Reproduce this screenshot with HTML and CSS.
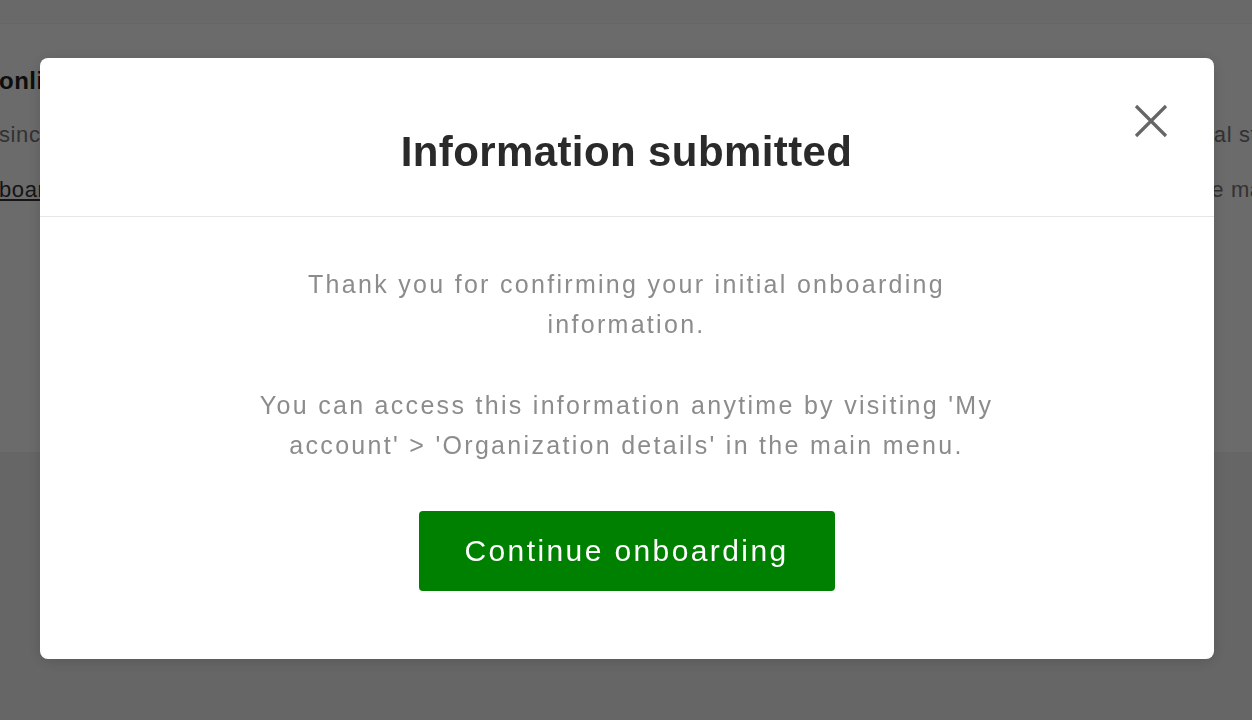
FILE: index.html
```html
<!DOCTYPE html>
<html lang="en">
<head>
<meta charset="utf-8">
<title>Information submitted</title>
<link rel="stylesheet" href="styles.css">
</head>
<body>
<div class="page">
  <header class="topbar"></header>
  <main class="card">
    <h2 class="card-title">online onboarding</h2>
    <p class="card-text">since your business was registered with us and verified and approved by our team, please complete all of the additional steps below before you continue</p>
    <p class="card-text"><a href="#" class="card-link">boarding guide</a> for more details and for help, or visit your organization account settings page at any time, right from the main menu</p>
  </main>
</div>

<div class="overlay">
  <div class="modal" role="dialog" aria-labelledby="modal-title">
    <div class="modal-header">
      <h1 id="modal-title" class="modal-title">Information submitted</h1>
      <button class="modal-close" aria-label="Close">
        <svg width="34" height="34" viewBox="0 0 34 34" aria-hidden="true">
          <path d="M2 2 L32 32 M32 2 L2 32" stroke="#666666" stroke-width="3.2" stroke-linecap="butt" fill="none"/>
        </svg>
      </button>
    </div>
    <div class="modal-body">
      <p class="modal-text">Thank you for confirming your initial onboarding information.</p>
      <p class="modal-text">You can access this information anytime by visiting 'My account' &gt; 'Organization details' in the main menu.</p>
      <button class="btn-primary">Continue onboarding</button>
    </div>
  </div>
</div>
</body>
</html>
```

FILE: styles.css
```css
* { box-sizing: border-box; }

html, body {
  margin: 0;
  padding: 0;
  height: 100%;
}

body {
  font-family: "Liberation Sans", Arial, sans-serif;
  background: #f3f3f3;
  overflow: hidden;
}

.page {
  display: flex;
  flex-direction: column;
  overflow: hidden;
}

.topbar {
  height: 24px;
  background: #fbfbfb;
  border-bottom: 1px solid #f2f2f2;
}

.card {
  height: 428px;
  background: #ffffff;
  padding: 42px 0 0 0;
  margin-left: -1px;
  overflow: hidden;
}

.card-title {
  margin: 0;
  font-size: 24px;
  line-height: 30px;
  font-weight: bold;
  color: #222;
  letter-spacing: 0.5px;
}

.card-text {
  margin: 23px 0 0 0;
  font-size: 22px;
  line-height: 32px;
  color: #777;
  white-space: nowrap;
  letter-spacing: 0.6px;
}

.card-link {
  color: #333;
}

.overlay {
  position: fixed;
  inset: 0;
  background: rgba(0, 0, 0, 0.58);
  display: flex;
  justify-content: center;
  align-items: flex-start;
  padding: 58px 0 0 1px;
}

.modal {
  width: 1174px;
  background: #ffffff;
  border-radius: 8px;
  box-shadow: 0 2px 16px rgba(0, 0, 0, 0.15);
  display: flex;
  flex-direction: column;
}

.modal-header {
  position: relative;
  height: 159px;
  border-bottom: 1px solid #e6e6e6;
  display: flex;
  justify-content: center;
  padding-top: 70px;
}

.modal-title {
  margin: 0;
  font-size: 42px;
  line-height: 48px;
  font-weight: bold;
  color: #2a2a2a;
  letter-spacing: 0.4px;
}

.modal-close {
  position: absolute;
  top: 46px;
  right: 46px;
  width: 34px;
  height: 34px;
  padding: 0;
  border: none;
  background: transparent;
  cursor: pointer;
  display: flex;
}

.modal-body {
  display: flex;
  flex-direction: column;
  align-items: center;
  padding: 47px 0 68px;
}

.modal-text {
  margin: 0;
  max-width: 760px;
  text-align: center;
  font-size: 25px;
  line-height: 40px;
  color: #8c8c8c;
  letter-spacing: 2.3px;
}

.modal-text + .modal-text {
  margin-top: 41px;
}

.btn-primary {
  margin-top: 46px;
  width: 416px;
  height: 80px;
  border: none;
  border-radius: 4px;
  background: #008000;
  color: #ffffff;
  font-family: "Liberation Sans", Arial, sans-serif;
  font-size: 30px;
  letter-spacing: 2.4px;
  cursor: pointer;
}
```
